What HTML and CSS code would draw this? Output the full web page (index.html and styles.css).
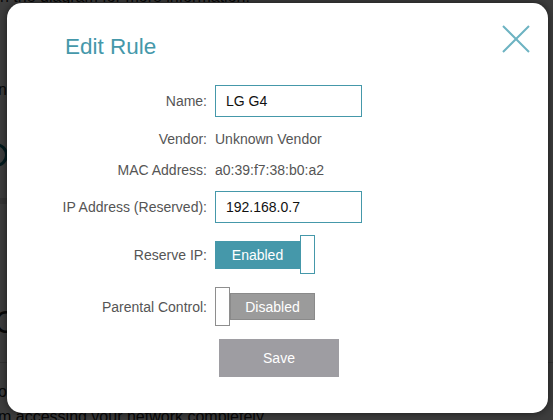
FILE: index.html
```html
<!DOCTYPE html>
<html>
<head>
<meta charset="utf-8">
<link rel="stylesheet" href="styles.css">
</head>
<body>
<div class="page">
  <p class="bg-top">within the diagram for more information.</p>
  <p class="bg-n">n</p>
  <div class="bg-icon"></div>
  <div class="bg-rule"></div>
  <p class="bg-c">C</p>
  <div class="bg-rule2"></div>
  <p class="bg-o">o</p>
  <p class="bg-bottom">m accessing your network completely.</p>
</div>
<div class="overlay">
  <div class="modal">
    <h1 class="title">Edit Rule</h1>
    <svg class="close" width="28" height="28" viewBox="0 0 28 28">
      <path d="M1 1 L27 27 M27 1 L1 27" stroke="#6db3c2" stroke-width="2" fill="none"/>
    </svg>
    <div class="form">
      <div class="row row-input">
        <span class="label">Name:</span>
        <div class="field"><input class="input" type="text" value="LG G4"></div>
      </div>
      <div class="row row-text">
        <span class="label">Vendor:</span>
        <span class="value">Unknown Vendor</span>
      </div>
      <div class="row row-text">
        <span class="label">MAC Address:</span>
        <span class="value">a0:39:f7:38:b0:a2</span>
      </div>
      <div class="row row-input">
        <span class="label">IP Address (Reserved):</span>
        <div class="field"><input class="input" type="text" value="192.168.0.7"></div>
      </div>
      <div class="row row-toggle">
        <span class="label">Reserve IP:</span>
        <div class="toggle on">
          <span class="bar">Enabled</span>
          <span class="knob"></span>
        </div>
      </div>
      <div class="row row-toggle row-parental">
        <span class="label">Parental Control:</span>
        <div class="toggle off">
          <span class="knob"></span>
          <span class="bar">Disabled</span>
        </div>
      </div>
      <div class="row row-save">
        <span></span>
        <div><button class="save">Save</button></div>
      </div>
    </div>
  </div>
</div>
</body>
</html>
```

FILE: styles.css
```css
html, body {
  margin: 0;
  padding: 0;
}
body {
  width: 553px;
  height: 420px;
  overflow: hidden;
  font-family: "Liberation Sans", Arial, sans-serif;
  background: #ffffff;
  position: relative;
}
.page {
  display: flow-root;
  color: #222;
  font-size: 16px;
  line-height: 18px;
}
.page p { margin: 0; white-space: nowrap; }
.bg-top {
  height: 18px;
  margin-top: -12px !important;
  margin-left: -32px !important;
}
.bg-n {
  height: 18px;
  margin-top: 75px !important;
  margin-left: -2px !important;
}
.bg-icon {
  margin-top: 44px;
  margin-left: -16px;
  width: 18px;
  height: 18px;
  border: 3px solid #0e6f7c;
  border-radius: 50%;
}
.bg-rule {
  margin-top: 31px;
  height: 6px;
  background: #dcdcdc;
  width: 20px;
}
.bg-c {
  height: 32px;
  margin-top: 102px !important;
  margin-left: -6px !important;
  font-size: 32px;
  line-height: 32px;
}
.bg-rule2 {
  margin-top: 24px;
  height: 1px;
  background: #cfcfcf;
}
.bg-o {
  height: 18px;
  margin-top: 20px !important;
  margin-left: -2px !important;
}
.bg-bottom {
  height: 18px;
  margin-top: 7px !important;
  margin-left: -2px !important;
}
.overlay {
  position: absolute;
  inset: 0;
  background: rgba(0, 0, 0, 0.76);
  display: flex;
  align-items: flex-start;
}
.modal {
  position: relative;
  margin: 3px 0 0 7px;
  width: 541px;
  height: 410px;
  background: #ffffff;
  border-radius: 15px;
  box-shadow: 0 0 8px rgba(0, 0, 0, 0.55);
  box-sizing: border-box;
  padding-top: 31px;
}
.title {
  margin: 0;
  padding-left: 58px;
  font-weight: normal;
  font-size: 22.5px;
  line-height: 25px;
  color: #4598aa;
}
.close {
  position: absolute;
  left: 495px;
  top: 22px;
}
.form {
  margin-top: 26px;
  display: flex;
  flex-direction: column;
  gap: 12px;
}
.row {
  display: grid;
  grid-template-columns: 200px 1fr;
  column-gap: 8px;
  align-items: center;
  font-size: 14px;
  color: #555555;
}
.label {
  text-align: right;
  white-space: nowrap;
}
.row-input { height: 32px; }
.row-text { height: 19px; }
.row-toggle { height: 39px; }
.row-parental { margin-top: 1px; }
.row-save { height: 38px; margin-top: 1px; }
.input {
  display: block;
  box-sizing: border-box;
  width: 147px;
  height: 32px;
  margin: 0;
  border: 1px solid #4598aa;
  padding: 0 10px;
  font-family: "Liberation Sans", Arial, sans-serif;
  font-size: 14px;
  color: #111111;
  background: #ffffff;
  outline: none;
}
.toggle {
  display: flex;
  align-items: center;
  width: 100px;
  height: 39px;
}
.bar {
  box-sizing: border-box;
  width: 85px;
  height: 28px;
  display: flex;
  align-items: center;
  justify-content: center;
  color: #ffffff;
  font-size: 14px;
}
.knob {
  box-sizing: border-box;
  width: 15px;
  height: 39px;
  background: #ffffff;
}
.toggle.on .bar { background: #4598aa; }
.toggle.on .knob { border: 1px solid #4598aa; }
.toggle.off .bar {
  background: #9b9b9b;
  border: 1px solid #8a8a8a;
  height: 27px;
}
.toggle.off .knob { border: 1px solid #8e8e8e; }
.save {
  display: block;
  margin-left: 4px;
  width: 120px;
  height: 38px;
  border: none;
  background: #9e9da2;
  color: #ffffff;
  font-family: "Liberation Sans", Arial, sans-serif;
  font-size: 14px;
  padding: 0;
}
```
